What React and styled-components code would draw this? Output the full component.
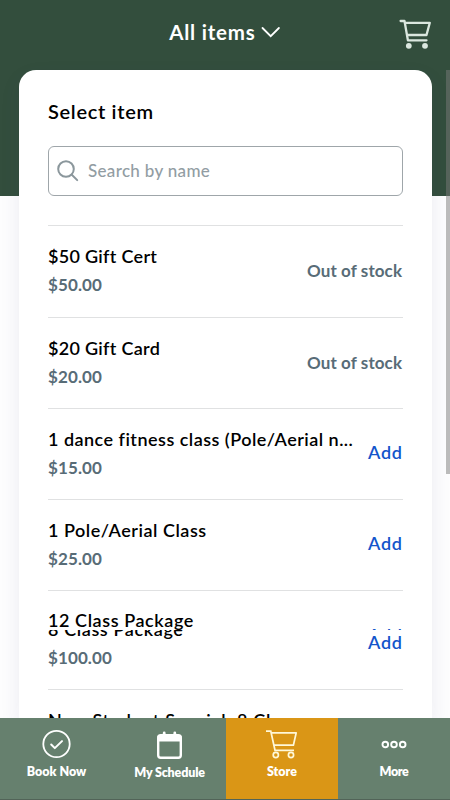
import React from "react";
import styled, { createGlobalStyle } from "styled-components";

const colors = {
  header: "#334e3d",
  tab: "#66806e",
  tabActive: "#da9616",
  text: "#000000",
  muted: "#586c77",
  placeholder: "#929da3",
  link: "#1355cb",
  line: "#e0e1e2",
};

const GlobalStyle = createGlobalStyle`
  * {
    box-sizing: border-box;
  }
  body {
    margin: 0;
    overflow: hidden;
    font-family: Lato, "Open Sans", sans-serif;
  }
`;

const Screen = styled.div`
  position: relative;
  display: flex;
  flex-direction: column;
  width: 450px;
  height: 800px;
  overflow: hidden;
  background: linear-gradient(${colors.header} 196px, #fdfdfe 196px);
`;

const Header = styled.header`
  display: grid;
  grid-template-columns: 1fr auto 1fr;
  align-items: center;
  flex: none;
  height: 70px;
  padding: 0 18px 6px;
`;

const HeaderTitle = styled.div`
  display: flex;
  align-items: center;
  grid-column: 2;
  gap: 5px;
  color: #fff;
`;

const CartLink = styled.div`
  justify-self: end;
  height: 32px;
  margin-top: 3px;
`;

const Label = styled.span`
  display: block;
  margin-right: -${({ $spacing }) => Math.max($spacing || 0, 0)}px;
  font-size: ${({ $size }) => $size || 18}px;
  font-weight: ${({ $weight }) => $weight || 600};
  line-height: ${({ $line }) => $line || 28}px;
  letter-spacing: ${({ $spacing }) => $spacing || 0}px;
  color: ${({ $color }) => $color || "inherit"};
  white-space: nowrap;
`;

const Card = styled.main`
  flex: 1;
  min-height: 0;
  margin: 0 18px 0 19px;
  padding: 27px 29px 0;
  overflow: hidden;
  background: #fff;
  border-radius: 17px 17px 0 0;
  box-shadow: 0 8px 20px rgba(60, 60, 110, 0.09);
`;

const SearchBox = styled.div`
  display: flex;
  align-items: center;
  gap: 9px;
  height: 50px;
  margin: 21px 0 29px;
  padding: 0 8px;
  border: 1px solid #9fa6aa;
  border-radius: 6px;
`;

const Row = styled.div`
  display: flex;
  justify-content: space-between;
  height: ${({ $height }) => $height}px;
  padding-top: 16px;
  border-top: 1px solid ${colors.line};
`;

const PriceLine = styled.div`
  margin-top: 1px;
`;

const Status = styled.div`
  padding: ${({ $top }) => $top}px 1px 0 0;
`;

const SplitRow = styled.div`
  height: 99px;
  border-top: 1px solid ${colors.line};
`;

// The row is cut in two bands, each showing its own part of the content.
const Band = styled.div`
  display: flex;
  justify-content: space-between;
  height: ${({ $height }) => $height}px;
  padding-right: 1px;
  overflow: hidden;
`;

const BandColumn = styled.div`
  margin-top: ${({ $shift }) => $shift}px;
`;

const TabBar = styled.nav`
  display: grid;
  grid-template-columns: 113px 113px 112px 112px;
  flex: none;
  height: 82px;
  background: ${colors.tab};
  border-bottom: 1px solid #526458;
`;

const Tab = styled.div`
  display: flex;
  flex-direction: column;
  align-items: center;
  padding-top: ${({ $top }) => $top || 10}px;
  color: #fff;
  background: ${({ $active }) => ($active ? colors.tabActive : "transparent")};
`;

const TabIcon = styled.div`
  height: ${({ $height }) => $height || 35}px;
`;

const Scrollbar = styled.div`
  position: absolute;
  top: 70px;
  right: 0;
  width: 4px;
  height: 404px;
  background: rgba(122, 122, 122, 0.5);
`;

const ChevronIcon = () => (
  <svg width="21" height="14" viewBox="0 0 21 14" fill="none" display="block">
    <path d="M2.5 3l8.2 8.2L18.9 3" stroke="#fff" strokeWidth="1.8" strokeLinecap="round" />
  </svg>
);

const CartIcon = () => (
  <svg width="34" height="32" viewBox="0 0 34 32" fill="none" display="block">
    <g stroke="#dbe7df" strokeWidth="2.3" strokeLinecap="round" strokeLinejoin="round">
      <path d="M2.6 3h3.9l3.4 19.3h18.6" />
      <path d="M7.2 4.8h24.6l-3.3 12.2H9.3" />
    </g>
    <circle cx="10.8" cy="27.8" r="2.9" fill="#dbe7df" />
    <circle cx="27" cy="27.8" r="2.9" fill="#dbe7df" />
  </svg>
);

const SearchIcon = () => (
  <svg width="22" height="22" viewBox="0 0 22 22" fill="none" display="block">
    <g stroke="#8b979c" strokeWidth="2" strokeLinecap="round">
      <circle cx="9" cy="9" r="7.8" />
      <path d="M14.8 14.8l5.4 5.3" />
    </g>
  </svg>
);

const BookIcon = () => (
  <svg width="30" height="32" viewBox="0 0 30 32" fill="none" display="block">
    <g stroke="#fff" strokeLinecap="round" strokeLinejoin="round">
      <circle cx="14.5" cy="16" r="13.2" strokeWidth="1.8" />
      <path d="M9.2 16.5l3.6 3.6 7.2-7" strokeWidth="2" />
    </g>
  </svg>
);

const CalendarIcon = () => (
  <svg width="26" height="30" viewBox="0 0 26 30" fill="none" display="block">
    <rect x="1.2" y="6.2" width="22.6" height="22.6" rx="2.5" stroke="#fff" strokeWidth="2.4" />
    <path d="M.5 7h24v5.5H.5z" fill="#fff" />
    <path d="M7.2 7V4M17.8 7V4" stroke="#fff" strokeWidth="2.8" strokeLinecap="round" />
  </svg>
);

const StoreIcon = () => (
  <svg width="32" height="32" viewBox="0 0 32 32" fill="none" display="block">
    <g stroke="#fff8d8" strokeWidth="1.7">
      <path d="M0 3.2h4.8l4.2 19.1h19" />
      <path d="M5.2 4.8h25l-2.8 12.4H8" strokeLinejoin="round" />
      <circle cx="9.8" cy="27" r="2.6" />
      <circle cx="25" cy="27" r="2.6" />
    </g>
  </svg>
);

const MoreIcon = () => (
  <svg width="26" height="32" viewBox="0 0 26 32" fill="none" display="block">
    <g stroke="#fff" strokeWidth="1.9">
      <circle cx="4.3" cy="16.5" r="2.8" />
      <circle cx="13" cy="16.5" r="2.8" />
      <circle cx="21.7" cy="16.5" r="2.8" />
    </g>
  </svg>
);

const items = [
  { name: "$50 Gift Cert", price: "$50.00", height: 92, spacing: 0.3 },
  { name: "$20 Gift Card", price: "$20.00", height: 91, spacing: 0.3 },
  {
    name: "1 dance fitness class (Pole/Aerial n...",
    price: "$15.00",
    height: 91,
    available: true,
    spacing: 0.48,
  },
  { name: "1 Pole/Aerial Class", price: "$25.00", height: 91, available: true, spacing: 0.53 },
];

const tabs = [
  { label: "Book Now", icon: <BookIcon />, spacing: 0 },
  { label: "My Schedule", icon: <CalendarIcon />, spacing: -0.15, top: 11, iconHeight: 35 },
  { label: "Store", icon: <StoreIcon />, spacing: 0, active: true },
  { label: "More", icon: <MoreIcon />, spacing: -0.4 },
];

const AddLabel = () => (
  <Label $color={colors.link} $spacing={0.8}>
    Add
  </Label>
);

const Price = ({ children }) => (
  <PriceLine>
    <Label $size={17} $weight={700} $color={colors.muted} $spacing={0.1}>
      {children}
    </Label>
  </PriceLine>
);

const App = () => {
  return (
    <Screen>
      <GlobalStyle />
      <Header>
        <HeaderTitle>
          <Label $size={20.5} $weight={700} $spacing={0.8}>
            All items
          </Label>
          <ChevronIcon />
        </HeaderTitle>
        <CartLink>
          <CartIcon />
        </CartLink>
      </Header>
      <Card>
        <Label $size={20} $spacing={0.68}>
          Select item
        </Label>
        <SearchBox>
          <SearchIcon />
          <Label $size={17} $weight={500} $color={colors.placeholder} $spacing={0.32}>
            Search by name
          </Label>
        </SearchBox>
        {items.map((item) => (
          <Row key={item.name} $height={item.height}>
            <div>
              <Label $color={colors.text} $spacing={item.spacing}>
                {item.name}
              </Label>
              <Price>{item.price}</Price>
            </div>
            <Status $top={item.available ? 13 : 15}>
              {item.available ? (
                <AddLabel />
              ) : (
                <Label $size={17} $weight={700} $color={colors.muted} $spacing={0.1}>
                  Out of stock
                </Label>
              )}
            </Status>
          </Row>
        ))}
        <SplitRow>
          <Band $height={39}>
            <BandColumn $shift={15}>
              <Label $spacing={0.58}>12 Class Package</Label>
            </BandColumn>
            <BandColumn $shift={30}>
              <AddLabel />
            </BandColumn>
          </Band>
          <Band $height={59}>
            <BandColumn $shift={-15}>
              <Label $spacing={0.62}>8 Class Package</Label>
              <Price>$100.00</Price>
            </BandColumn>
            <BandColumn $shift={-2}>
              <AddLabel />
            </BandColumn>
          </Band>
        </SplitRow>
        <Row $height={92}>
          <Label $spacing={0.75}>New Student Special: 8 Classes</Label>
        </Row>
      </Card>
      <TabBar>
        {tabs.map((tab) => (
          <Tab key={tab.label} $active={tab.active} $top={tab.top}>
            <TabIcon $height={tab.iconHeight}>{tab.icon}</TabIcon>
            <Label $size={12.5} $weight={800} $line={18} $spacing={tab.spacing}>
              {tab.label}
            </Label>
          </Tab>
        ))}
      </TabBar>
      <Scrollbar />
    </Screen>
  );
};

export default App;
